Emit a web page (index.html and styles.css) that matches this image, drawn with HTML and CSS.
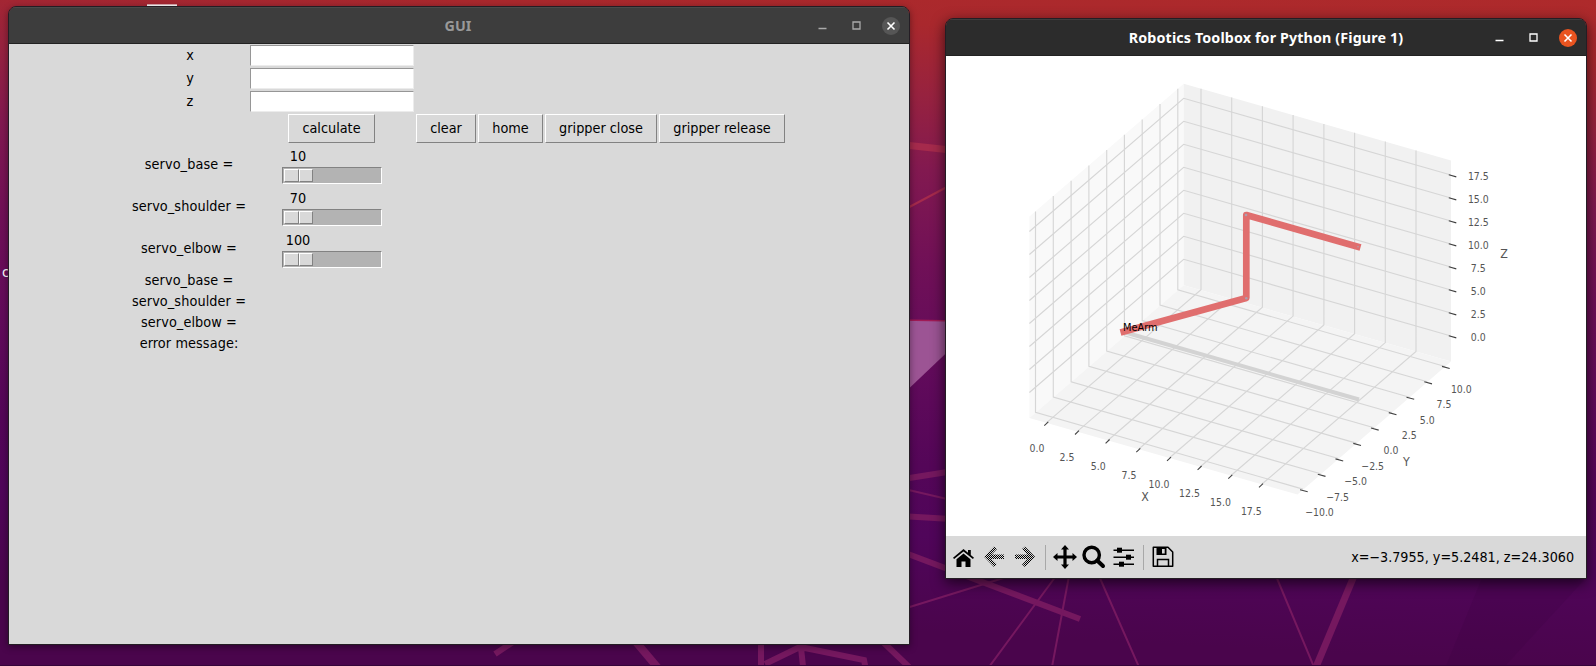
FILE: index.html
```html
<!DOCTYPE html>
<html lang="en">
<head>
<meta charset="utf-8">
<title>GUI</title>
<link rel="stylesheet" href="styles.css">
</head>
<body>
<div class="desktop">
  <svg class="wallpaper" viewBox="0 0 1596 666" width="1596" height="666">
    <path class="shade" d="M1482 578H1586L1505 666H1446Z"/>
    <path class="facet" d="M900 320L960 321V340L900 397Z"/>
    <path class="facet-edge" d="M900 320L960 321"/>
    <path class="beam-red" stroke-width="7" d="M900 144.500L960 151"/>
    <path class="beam-red" stroke-width="2" d="M900 212L960 180"/>
    <path class="beam" stroke-width="6" d="M900 479.500L960 470M900 516L960 519.500M900 551L1080 619M495 654L525 634M761 640V666M765 664L800 647L864 660L866 670M801 648L803 666M884 643L910 668"/>
    <path class="beam" stroke-width="8" d="M636 642L658 668"/>
    <path class="beam" stroke-width="2" d="M900 488L960 502M900 610L1010 576M1056 576L989 667M1069 576L1052 667M1099 576L1139 667M1276 576L1314 667"/>
    <path class="beam" stroke-width="7" d="M1354 576L1316 667"/>
    <path class="dock-mark" d="M147 5.300H177"/>
    <path class="floor-line" d="M0 665.500H1596"/>
  </svg>
  <span class="icon-label">c</span>

  <section class="window window-gui">
    <header class="titlebar">
      <h1 class="title">GUI</h1>
      <div class="controls">
        <svg width="9" height="18" viewBox="0 0 9 18"><path d="M.5 11.500H8.500"/></svg>
        <svg width="9" height="18" viewBox="0 0 9 18"><path d="M1 5H8V12H1Z"/></svg>
        <svg width="18" height="18" viewBox="0 0 18 18"><circle class="close-disc" cx="9" cy="9" r="9"/><path class="close-x" d="M5.500 5.500L12.500 12.500M12.500 5.500L5.500 12.500"/></svg>
      </div>
    </header>
    <main class="form">
      <label class="cell-label">x</label><div class="entry"></div>
      <label class="cell-label">y</label><div class="entry"></div>
      <label class="cell-label">z</label><div class="entry"></div>
      <button class="btn btn-calculate">calculate</button>
      <div class="actions">
        <button class="btn btn-clear">clear</button>
        <button class="btn btn-home">home</button>
        <button class="btn btn-close">gripper close</button>
        <button class="btn btn-release">gripper release</button>
      </div>
      <label class="cell-label wide tall">servo_base =</label>
      <div class="scale"><span class="scale-value">10</span><div class="trough"><i class="thumb"></i><i class="thumb"></i></div></div>
      <label class="cell-label wide tall">servo_shoulder =</label>
      <div class="scale"><span class="scale-value">70</span><div class="trough"><i class="thumb"></i><i class="thumb"></i></div></div>
      <label class="cell-label wide tall">servo_elbow =</label>
      <div class="scale"><span class="scale-value">100</span><div class="trough"><i class="thumb"></i><i class="thumb"></i></div></div>
      <label class="cell-label wide">servo_base =</label>
      <label class="cell-label wide">servo_shoulder =</label>
      <label class="cell-label wide">servo_elbow =</label>
      <label class="cell-label wide">error message:</label>
    </main>
  </section>

  <section class="window window-figure">
    <header class="titlebar">
      <h1 class="title">Robotics Toolbox for Python (Figure 1)</h1>
      <div class="controls">
        <svg width="9" height="18" viewBox="0 0 9 18"><path d="M.5 11.500H8.500"/></svg>
        <svg width="9" height="18" viewBox="0 0 9 18"><path d="M1 5H8V12H1Z"/></svg>
        <svg width="18" height="18" viewBox="0 0 18 18"><circle class="close-disc" cx="9" cy="9" r="9"/><path class="close-x" d="M5.500 5.500L12.500 12.500M12.500 5.500L5.500 12.500"/></svg>
      </div>
    </header>
    <svg class="plot" width="640" height="480" viewBox="946 56 640 480">
      <path fill="#f9f9f9" d="M1183.700 83.700L1029.400 216.600V418L1183.700 285.300Z"/>
      <path fill="#f1f1f1" d="M1183.700 83.700L1451 160.400V361.500L1183.700 285.300Z"/>
      <path fill="#f4f4f4" d="M1183.700 285.300L1451 361.500L1297.500 494.600L1029.400 418Z"/>
      <g class="grid">
        <path d="M1177.800 88.800v201l267.300 76.700M1160 104.100v201l267.300 76.700M1142.200 119.500v201l267.300 76.700M1124.400 134.800v201l267.300 76.700M1106.700 150.100v201l267.300 76.700M1088.900 165.400v201l267.300 76.700M1071.100 180.800v201l267.300 76.700M1053.300 196.100v201l267.300 76.700M1035.500 211.400v201l267.300 76.700"/>
        <path d="M1201 88.700v201l-154.300 132.900M1231.700 97.500v201l-154.300 132.900M1262.400 106.300v201l-154.300 132.900M1293.100 115.100v201l-154.300 132.900M1323.900 123.900v201l-154.300 132.900M1354.600 132.800v201l-154.300 132.900M1385.300 141.600v201l-154.300 132.900M1416 150.400v201l-154.300 132.900"/>
        <path d="M1029.400 231.500l154.300-133.200l267.300 76.700M1029.400 254.500l154.300-133.200l267.300 76.700M1029.400 277.500l154.300-133.200l267.300 76.700M1029.400 300.500l154.300-133.200l267.300 76.700M1029.400 323.500l154.300-133.200l267.300 76.700M1029.400 346.500l154.300-133.200l267.300 76.700M1029.400 369.500l154.300-133.200l267.300 76.700M1029.400 392.500l154.300-133.200l267.300 76.700"/>
      </g>
      <path class="tick" d="M1044.300 425.700l4-3.800M1075 434.500l4-3.800M1105.600 443.300l4-3.800M1136.300 452.100l4-3.800M1167 460.900l4-3.800M1197.600 469.800l4-3.800M1228.300 478.600l4-3.800M1259 487.400l4-3.800"/>
      <path class="tick" d="M1442 366.400l7.700 2.100M1424.300 381.800l7.700 2.100M1406.500 397.200l7.700 2.100M1388.800 412.600l7.700 2.100M1371 428l7.700 2.100M1353.300 443.400l7.700 2.100M1335.500 458.900l7.700 2.100M1317.800 474.300l7.700 2.100M1300 489.700l7.700 2.100"/>
      <path class="tick" d="M1448.800 174.800l7.500 2.100M1448.800 197.800l7.500 2.100M1448.800 220.800l7.500 2.100M1448.800 243.800l7.500 2.100M1448.800 266.800l7.500 2.100M1448.800 289.800l7.500 2.100M1448.800 312.800l7.500 2.100M1448.800 335.800l7.500 2.100"/>
      <path class="arm-shadow" d="M1122 331.500L1359 399.500"/>
      <path class="arm" d="M1120.500 332.500L1246.300 298V215L1360.500 247.500"/>
      <g class="joint"><circle cx="1246.300" cy="298.300" r="1.300"/><circle cx="1246" cy="215" r="1.300"/><circle cx="1358" cy="246.800" r=".8"/></g>
      <text class="robot-name" x="1123" y="331">MeArm</text>
      <g class="tick-label">
        <text x="1037" y="452">0.0</text><text x="1067" y="461">2.5</text><text x="1098.300" y="470">5.0</text><text x="1129" y="479">7.5</text><text x="1159" y="488">10.0</text><text x="1189.500" y="497">12.5</text><text x="1220.500" y="506">15.0</text><text x="1251.300" y="514.500">17.5</text>
        <text x="1461.300" y="392.700">10.0</text><text x="1444" y="408">7.5</text><text x="1427.300" y="423.700">5.0</text><text x="1409.300" y="439">2.5</text><text x="1391" y="454">0.0</text><text x="1372.700" y="469.700">−2.5</text><text x="1355.500" y="485">−5.0</text><text x="1337.500" y="500.700">−7.5</text><text x="1319.500" y="515.700">−10.0</text>
        <text x="1478.300" y="180">17.5</text><text x="1478.300" y="203">15.0</text><text x="1478.300" y="226">12.5</text><text x="1478.300" y="249">10.0</text><text x="1478.300" y="272">7.5</text><text x="1478.300" y="295">5.0</text><text x="1478.300" y="318">2.5</text><text x="1478.300" y="341">0.0</text>
      </g>
      <g class="axis-label"><text x="1145" y="500.500">X</text><text x="1406.500" y="465.700">Y</text><text x="1504" y="258">Z</text></g>
    </svg>
    <footer class="toolbar">
      <div class="tools tools-nav">
        <svg viewBox="0 0 24 24"><path d="M11.500 8.500L18.500 14.300V22H13.500V16.500H9.500V22H4.500V14.300Z"/><path d="M11.500 4L16 7.700V5H18.800V10L22 12.800L20.900 14.100L11.500 6.400L2.100 14.100L1 12.800Z"/></svg>
        <svg viewBox="0 0 24 24"><defs><pattern id="dither" width="2" height="2" patternUnits="userSpaceOnUse"><rect width="1" height="1"/><rect x="1" y="1" width="1" height="1"/></pattern></defs><path fill="url(#dither)" d="M12 1.500L15 4L9.500 9.500H22V14H9.500L15 19.500L12 22L2 11.800Z"/></svg>
        <svg viewBox="0 0 24 24"><path fill="url(#dither)" d="M12 1.500L9 4L14.500 9.500H2V14H14.500L9 19.500L12 22L22 11.800Z"/></svg>
      </div>
      <i class="separator"></i>
      <div class="tools tools-view">
        <svg viewBox="0 0 24 24"><path d="M12 0L16 4.500H13.600V10.400H19.500V8L24 12L19.500 16V13.600H13.600V19.500H16L12 24L8 19.500H10.400V13.600H4.500V16L0 12L4.500 8V10.400H10.400V4.500H8Z"/></svg>
        <svg viewBox="0 0 24 24"><circle cx="9.700" cy="10" r="7.700" fill="none" stroke="#000" stroke-width="3.400"/><path d="M15.200 15.500L21 21" stroke="#000" stroke-width="4" stroke-linecap="round"/></svg>
        <svg viewBox="0 0 24 24"><path d="M1.500 4.500H22V6H1.500ZM1.500 11.500H22V13H1.500ZM1.500 18.500H22V20H1.500Z"/><rect x="5" y="2.700" width="5" height="5"/><rect x="14" y="9.700" width="5" height="5"/><rect x="7" y="16.700" width="5" height="5"/></svg>
      </div>
      <i class="separator"></i>
      <div class="tools tools-view">
        <svg viewBox="0 0 24 24"><path fill="none" stroke="#000" stroke-width="1.500" stroke-linejoin="round" d="M2.300 2.300H17L21.700 7V21.300H2.300Z"/><path fill="none" stroke="#000" stroke-width="1.500" d="M6.500 21V14.500H17.500V21"/><path fill-rule="evenodd" d="M5.500 2.500H15.500V10H5.500ZM11 4V8.500H13.700V4Z"/></svg>
      </div>
      <output class="coords">x=−3.7955, y=5.2481, z=24.3060</output>
    </footer>
  </section>
</div>
</body>
</html>
```
FILE: styles.css
```css
* { box-sizing: border-box; }
body { margin: 0; }

.desktop {
  position: relative;
  width: 1596px;
  height: 666px;
  overflow: hidden;
  font-family: "DejaVu Sans Condensed", "DejaVu Sans", sans-serif;
  font-stretch: condensed;
  background: linear-gradient(183deg, #ae2a2b 0, #a9282d 60px, #97223f 130px, #821950 205px, #701057 300px, #620b5b 400px, #540658 500px, #50055a 570px, #4a054c 666px);
}
.wallpaper { display: block; }
.shade { fill: rgba(50, 0, 60, .14); }
.facet { fill: #9c5494; }
.facet-edge { stroke: #a01a55; stroke-width: 1.5; }
.beam-red { stroke: #a52a4c; fill: none; }
.beam { stroke: #75185f; fill: none; }
.dock-mark { stroke: #fff; stroke-width: 1.8; }
.floor-line { stroke: #35053a; }
.icon-label { position: absolute; left: 2px; top: 264px; font: 14px/16px "Noto Sans", sans-serif; color: #fff; }

/* Windows float freely on the desktop */
.window {
  position: absolute;
  border: 1px solid #241d24;
  border-radius: 8px 8px 0 0;
  overflow: hidden;
}
.window-gui { left: 8px; top: 6px; width: 902px; height: 639px; box-shadow: 0 2px 7px rgba(0, 0, 0, .4); }
.window-figure { left: 945px; top: 18px; width: 642px; height: 561px; box-shadow: 0 4px 14px rgba(0, 0, 0, .65); }

.titlebar {
  display: grid;
  grid-template-columns: 1fr auto 1fr;
  align-items: center;
  height: 37px;
  padding-right: 9px;
  background: #2c2c2c;
  border-bottom: 1px solid #222;
  border-top: 1px solid #3d3d3d;
  color: #fff;
}
.title { grid-column: 2; margin: 0; padding-left: 9px; font: 700 14.3px/18px "Noto Sans", sans-serif; letter-spacing: .12px; white-space: nowrap; }
.controls { grid-column: 3; justify-self: end; display: flex; gap: 25px; align-items: center; }
.controls svg { display: block; fill: none; stroke: currentColor; stroke-width: 1.3; }
.controls svg:last-child { margin-left: -4px; }
.controls .close-disc { fill: #e95420; stroke: none; }
.controls .close-x { stroke: #fff; stroke-width: 1.6; }
.window-gui .titlebar { background: #3d3d3d; border-top-color: #4a4a4a; color: #999; }
.window-gui .title { padding-left: 7px; }
.window-gui .controls { color: #aaa; }
.window-gui .close-disc { fill: #565656; }

.form {
  display: grid;
  grid-template-columns: 122px 118px 166px auto;
  grid-template-rows: repeat(3, 23px) 31px repeat(3, 42px) repeat(4, 21px);
  height: 600px;
  background: #d9d9d9;
  color: #000;
  font-size: 14.3px;
}
.cell-label { grid-column: 2; place-self: center; line-height: 21px; white-space: nowrap; }
.cell-label.wide { padding-right: 2px; letter-spacing: .1px; }
.cell-label.tall { padding-bottom: 2px; }
.entry { grid-column: 3; margin: 1px; background: #fff; border: 1px solid; border-color: #969696 #ececec #ececec #969696; }
.btn {
  height: 29px;
  padding: 0 0 2px;
  font: inherit;
  color: #000;
  background: #d9d9d9;
  border: 1px solid;
  border-color: #fff #828282 #828282 #fff;
  white-space: nowrap;
}
.btn-calculate { grid-column: 3; width: 87px; place-self: center; margin-right: 1px; }
.actions { grid-column: 4; display: flex; gap: 2px; padding: 1px; align-items: center; }
.btn-clear { width: 60px; }
.btn-home { width: 65px; }
.btn-close { width: 112px; }
.btn-release { width: 126px; }
.scale { grid-column: 3; justify-self: center; width: 100px; padding-top: 2px; }
.scale-value { display: block; width: 32px; height: 21px; text-align: center; line-height: 20px; }
.trough { display: flex; height: 17px; padding: 1px; background: #b3b3b3; border: 1px solid; border-color: #828282 #fff #fff #828282; }
.thumb { width: 14.5px; height: 13px; background: #d9d9d9; border: 1px solid; border-color: #fff #828282 #828282 #fff; }

.plot { display: block; background: #fff; text-anchor: middle; }
.grid { fill: none; stroke: #d6d6d6; stroke-width: 1.15; }
.tick { stroke: #444; stroke-width: 1.1; }
.arm { fill: none; stroke: #e06e6e; stroke-width: 6.7; stroke-linejoin: round; }
.arm-shadow { stroke: #d3d3d3; stroke-width: 4; }
.joint { fill: #a9a0b0; }
.robot-name { font-size: 10.9px; text-anchor: start; }
.tick-label { font-size: 10.4px; fill: #555; }
.axis-label { font-size: 12.3px; fill: #555; }

.toolbar { display: flex; align-items: center; height: 42px; padding: 0 12px 0 3px; background: #d9d9d9; }
.tools { display: flex; }
.tools svg { display: block; width: 24px; height: 24px; margin: 0 3px; }
.tools-nav svg:last-child { margin: 0 2px 0 4px; }
.tools-view svg { margin: 0 2.75px; }
.separator { width: 1px; height: 25px; margin: 0 4px 0 6px; background: #a8a8a8; }
.separator ~ .separator { margin: 0 5px 0 4px; }
.coords { margin-left: auto; font-size: 14.2px; color: #000; white-space: nowrap; }
```
